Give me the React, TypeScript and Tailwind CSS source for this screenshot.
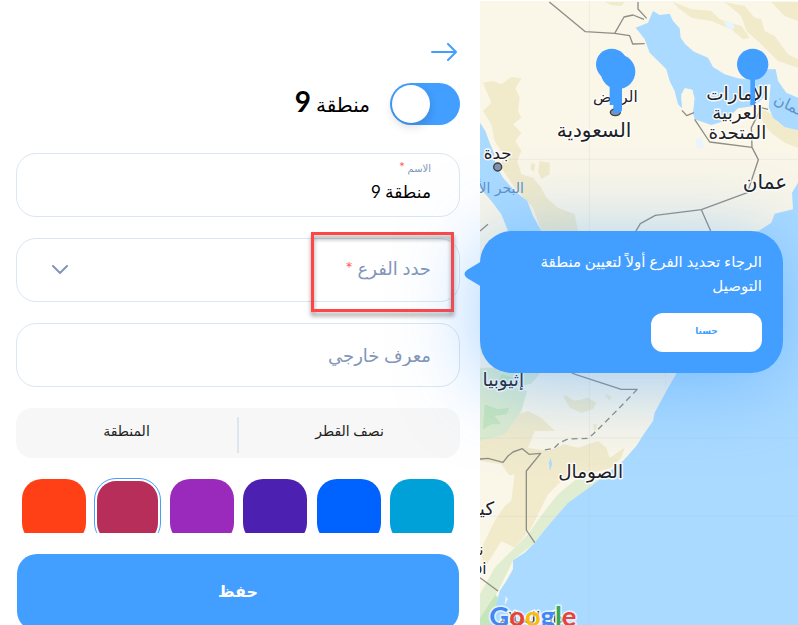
import { useState } from "react";

const COLORS = [
  { name: "سماوي", swatch: "bg-[#00a0d8]" },
  { name: "أزرق", swatch: "bg-[#0062ff]" },
  { name: "نيلي", swatch: "bg-[#4c20b0]" },
  { name: "بنفسجي", swatch: "bg-[#992abb]" },
  { name: "عنابي", swatch: "bg-[#b82e5a]" },
  { name: "برتقالي", swatch: "bg-[#ff4016]" },
];

interface MapLabelProps {
  x: number;
  y: number;
  size?: number;
  fill?: string;
  children: string;
}

function MapLabel({ x, y, size = 55, fill = "#1f2124", children }: MapLabelProps) {
  return (
    <text
      x={x}
      y={y}
      fontSize={size}
      fill={fill}
      textAnchor="middle"
      stroke="#fff"
      strokeOpacity={0.85}
      strokeWidth={9}
      strokeLinejoin="round"
      paintOrder="stroke"
    >
      {children}
    </text>
  );
}

function RegionMap() {
  return (
    <svg
      viewBox="6 -3 954 1875"
      preserveAspectRatio="xMinYMin slice"
      className="absolute inset-0 size-full font-['DejaVu_Sans',sans-serif]"
      role="img"
      aria-label="خريطة"
    >
      <rect x="0" y="0" width="960" height="1900" fill="#faf6e8" />

      {/* highlands */}
      <g fill="#f1eacb">
        <path d="M15 245L45 240L70 250L100 228L130 232L112 262L125 290L120 330L130 350L105 370L130 395L112 420L130 450L118 480L130 520L165 530L190 560L205 590L240 620L290 640L300 690L190 690L165 620L110 560L70 500L75 460L50 420L40 370L15 330L40 305Z" />
        <path d="M185 480L215 485L215 520L190 535L180 510ZM160 485L172 490L168 512L158 505Z" />
        <path d="M585 3L640 25L700 30L725 55L790 75L815 110L795 115L760 85L700 60L640 50L600 20ZM740 3L800 15L830 50L850 55L860 90L890 105L930 160L960 175L960 200L900 180L850 130L805 90L790 45ZM880 3L960 3L960 60L920 45ZM380 3L440 3L430 15L400 12Z" />
        <path d="M850 325L875 335L900 365L960 390L960 440L920 425L885 400L855 370Z" />
        <path d="M6 1240L90 1250L150 1230L190 1250L230 1290L170 1290L150 1340L210 1350L260 1330L300 1340L360 1320L385 1340L395 1370L440 1340L430 1370L400 1400L250 1440L210 1480L160 1580L110 1640L70 1620L20 1700L6 1650L50 1560L90 1500L100 1430L70 1390L6 1380Z" />
        <path d="M250 1175L290 1200L330 1190L355 1205L345 1225L310 1235L275 1220ZM345 1270L357 1270L350 1300ZM380 1180L400 1185L395 1200Z" />
      </g>
      <path d="M6 1100L200 1100L150 1160L130 1230L80 1300L6 1320Z" fill="#dcebcf" />
      <g fill="#c5e5bd">
        <path d="M20 1210L60 1225L95 1220L85 1240L50 1245L70 1270L40 1270L15 1285ZM70 1120L110 1130L85 1155L60 1145Z" />
        <path d="M6 1800L45 1770L60 1790L45 1875L6 1875ZM110 1640L130 1635L125 1660L105 1655ZM180 1560L190 1570L175 1610L160 1600Z" />
      </g>
      <path
        d="M430 1440L340 1455L270 1505L205 1580L170 1625L105 1678L60 1770L6 1850L6 1780L50 1700L100 1650L150 1600L200 1530L240 1480L300 1430Z"
        fill="#e1edd0"
      />
      <path d="M6 1450L60 1430L110 1420L100 1500L60 1530L30 1600L6 1600ZM110 1160L190 1140L300 1110L420 1120L330 1170L230 1190Z" fill="#faf6e8" />

      {/* seas */}
      <g fill="#aadaff">
        <path d="M525 30L545 42L575 38L585 60L605 82L608 110L622 130L648 152L690 170L705 198L740 220L780 232L830 238L860 205L893 205L900 240L925 275L960 290L960 388L920 378L885 350L872 318L878 250L870 250L856 290L830 315L780 322L740 360L700 372L650 355L645 335L650 290L640 265L620 262L610 290L615 325L600 310L590 270L575 240L565 205L535 175L515 155L500 115L485 95L473 80L510 65Z" />
        <path d="M6 365L22 390L35 425L48 455L52 490L75 530L110 570L148 600L165 645L190 690L200 740L120 740L90 690L70 640L40 600L6 560Z" />
        <path d="M960 545L942 575L945 625L890 638L880 665L826 700L700 780L560 1120L565 1170L530 1235L525 1260L500 1295L475 1335L435 1380L340 1455L270 1505L205 1580L170 1625L140 1655L105 1678L105 1705L85 1740L65 1770L55 1810L30 1890L960 1890Z" />
        <path d="M218 1370L222 1390L216 1410L213 1385Z" />
      </g>
      <path d="M700 780L594 1120L565 1170L560 1120L600 900Z" fill="#faf6e8" />
      <path d="M735 60L765 65L770 85L750 82ZM655 415L670 408L678 435L660 443L652 430ZM83 1785L90 1795L80 1812Z" fill="#e8f5ff" />
      <path d="M610 280L620 262L645 268L648 310L638 335L626 342L612 325Z" fill="#faf6e8" />
      <path d="M334 0V1890M6 475H960M6 1311H960M6 1546H960" stroke="#9fb9bd" strokeOpacity="0.15" strokeWidth="3" fill="none" />

      {/* borders */}
      <g fill="none" stroke="#8e8e88" strokeWidth="4" strokeLinejoin="round">
        <path d="M214 3L322 92L410 97L455 104L464 129L500 128M410 97L438 48L465 42L498 55M480 3V24L506 52" />
        <path d="M612 328L626 344L648 335M650 355L695 423L822 439L841 476L808 575L670 626L532 643L487 668L468 700M670 626L698 690L760 800M822 439L820 380L850 320L870 325" />
        <path d="M180 1070L292 1120L430 1165H478" />
        <path d="M478 1165L415 1230L345 1300L330 1312L270 1314L245 1325L228 1342L193 1348" strokeDasharray="18 12" />
        <path d="M6 1374L30 1372L75 1384L90 1365L105 1353L133 1343L153 1360L188 1357L145 1410V1587L170 1625M6 1730L60 1770M6 690L30 670" />
      </g>

      {/* places */}
      <MapLabel x={412} y={303} size={46}>الرياض</MapLabel>
      <MapLabel x={348} y={408} size={60}>السعودية</MapLabel>
      <MapLabel x={59} y={474} size={50}>جدة</MapLabel>
      <MapLabel x={778} y={296}>الإمارات</MapLabel>
      <MapLabel x={778} y={354}>العربية</MapLabel>
      <MapLabel x={778} y={413}>المتحدة</MapLabel>
      <MapLabel x={861} y={563} size={60}>عمان</MapLabel>
      <MapLabel x={76} y={1156}>إثيوبيا</MapLabel>
      <MapLabel x={338} y={1430}>الصومال</MapLabel>
      <MapLabel x={2} y={1542}>كينيا</MapLabel>
      <MapLabel x={-46} y={1662} size={46}>نيروبي</MapLabel>
      <MapLabel x={-56} y={1718} size={46}>Nairobi</MapLabel>
      <MapLabel x={160} y={1865} size={46}>دار السلام</MapLabel>
      <g fill="#5e90c9" fontSize="42">
        <text x="33" y="576" textAnchor="middle">البحر الأحمر</text>
        <text x="976" y="350" fontSize="46" textAnchor="middle" transform="rotate(26 976 350)">خليج عمان</text>
      </g>
      <g fill="#8391ab" stroke="#3c3f45" strokeWidth="4">
        <circle cx="59" cy="498" r="12" />
        <ellipse cx="412" cy="334" rx="15" ry="10" />
      </g>

      {/* branch pins */}
      <g fill="#429eff">
        <circle cx="401" cy="190" r="47" />
        <circle cx="420" cy="212" r="52" />
        <path d="M395 240H432V325Q432 336 420 336H406V312H395Z" />
        <circle cx="824" cy="190" r="47" />
        <rect x="817" y="230" width="14" height="82" />
      </g>

      <text
        x="34"
        y="1874"
        fontSize="82"
        fontWeight="700"
        stroke="#fff"
        strokeOpacity="0.6"
        strokeWidth="10"
        strokeLinejoin="round"
        paintOrder="stroke"
        direction="ltr"
        className="font-['Lato',sans-serif]"
      >
        <tspan fill="#4285f4">G</tspan>
        <tspan fill="#ea4335">o</tspan>
        <tspan fill="#fbbc04">o</tspan>
        <tspan fill="#4285f4">g</tspan>
        <tspan fill="#34a853">l</tspan>
        <tspan fill="#ea4335">e</tspan>
      </text>
    </svg>
  );
}

export default function App() {
  const [active, setActive] = useState(true);
  const [name, setName] = useState("منطقة 9");
  const [color, setColor] = useState("عنابي");

  return (
    <div className="grid h-screen grid-cols-[480fr_318fr] grid-rows-[minmax(0,1fr)] overflow-hidden bg-white font-['Lato','DejaVu_Sans',sans-serif]">
      {/* Zone form */}
      <form dir="rtl" className="flex min-w-0 flex-col pt-10 pr-5 pl-4">
        <button type="button" aria-label="رجوع" className="flex h-6 w-8 shrink-0 items-center justify-center self-start text-[#429eff]">
          <svg viewBox="0 0 26 18" className="h-[18px] w-[26px]" fill="none" stroke="currentColor" strokeWidth="2" strokeLinecap="round" strokeLinejoin="round">
            <path d="M1 9H25M17 1L25 9L17 17" />
          </svg>
        </button>

        <div className="mt-[19px] flex h-[42px] shrink-0 items-center gap-5">
          <label className="relative block h-[42px] w-[70px] shrink-0">
            <input
              type="checkbox"
              role="switch"
              aria-label="تفعيل المنطقة"
              checked={active}
              onChange={(e) => setActive(e.target.checked)}
              className="peer size-full appearance-none rounded-full bg-slate-300 checked:bg-[#429eff]"
            />
            <span className="pointer-events-none absolute top-0.5 right-0.5 size-[38px] rounded-full bg-white shadow-[0_4px_10px_rgba(0,0,0,0.15)] peer-checked:right-auto peer-checked:left-0.5" />
          </label>
          <h1 className="pb-1 text-xl text-black">
            منطقة <span className="text-[28px] font-bold">9</span>
          </h1>
        </div>

        <div className="mt-7 flex h-16 shrink-0 flex-col justify-center rounded-[20px] border border-[#dbe6f1] px-7 pb-1">
          <label htmlFor="name" className="text-[10px] leading-4 text-[#8296b8]">
            الاسم <span className="text-sm leading-4 text-[#ff5b5b]">*</span>
          </label>
          <input
            id="name"
            value={name}
            onChange={(e) => setName(e.target.value)}
            className="h-8 w-full bg-transparent text-[17px] text-black outline-none"
          />
        </div>

        <div className="relative mt-[21px] flex h-16 shrink-0 items-center rounded-[20px] border border-[#dbe6f1] px-7 pb-1">
          <label htmlFor="branch" className="text-lg text-[#8296b8]">
            حدد الفرع <span className="text-[#ff5b5b]">*</span>
          </label>
          <select id="branch" className="h-full min-w-0 flex-1 appearance-none bg-transparent outline-none">
            <option value="" />
          </select>
          <svg viewBox="0 0 18 10" className="pointer-events-none mt-1 ml-1.5 h-2.5 w-[18px]" fill="none" stroke="#8296b8" strokeWidth="2" strokeLinecap="round" strokeLinejoin="round">
            <path d="M2 1L9 8L16 1" />
          </svg>
          <div className="pointer-events-none absolute -top-[7px] right-[5px] h-20 w-[143px] border-3 border-[#ff4545] drop-shadow-[0_4px_2px_rgba(0,0,0,0.4)]" />
        </div>

        <input
          aria-label="معرف خارجي"
          placeholder="معرف خارجي"
          className="mt-[21px] h-16 shrink-0 rounded-[20px] border border-[#dbe6f1] px-7 text-lg outline-none placeholder:text-[#8296b8]"
        />

        <div className="mt-[21px] flex h-[50px] shrink-0 items-center rounded-2xl bg-[#f7f7f7] text-sm text-[#222]">
          <button type="button" className="h-full flex-1 pb-1">نصف القطر</button>
          <span className="mt-1 h-9 w-0.5 bg-[#dbe6f1]" />
          <button type="button" className="h-full flex-1 pb-1">المنطقة</button>
        </div>

        <fieldset className="mt-5 flex h-[55px] shrink-0 justify-between overflow-hidden px-1.5 pt-px">
          <legend className="sr-only">اللون</legend>
          {COLORS.map((c) => (
            <input
              key={c.name}
              type="radio"
              name="color"
              aria-label={c.name}
              checked={color === c.name}
              onChange={() => setColor(c.name)}
              className={`size-16 appearance-none rounded-[20px] checked:mx-[-1px] checked:-mt-px checked:size-[67px] checked:rounded-[22px] checked:border checked:border-[#429eff] checked:bg-clip-content checked:p-0.5 ${c.swatch}`}
            />
          ))}
        </fieldset>

        <button type="submit" className="mx-px mt-[21px] h-[77px] shrink-0 rounded-[20px] bg-[#429eff] pb-1 text-base font-bold text-white">
          حفظ
        </button>
      </form>

      {/* Map with the branch hint over it */}
      <section className="relative min-w-0">
        <RegionMap />
        <div
          dir="rtl"
          role="dialog"
          aria-label="تنبيه"
          className="absolute top-[231px] right-[15px] left-0 rounded-[32px] bg-[#429eff] px-[21px] pt-[18px] pb-[21px] text-white shadow-[0_10px_80px_rgba(66,158,255,0.5)]"
        >
          <svg viewBox="0 0 18 28" className="absolute top-[29px] -left-4 h-7 w-[18px]" fill="#429eff">
            <path d="M18 1L3 10Q-2 14 3 18L18 27Z" />
          </svg>
          <p className="text-[15px] leading-6 font-medium">الرجاء تحديد الفرع أولاً لتعيين منطقة التوصيل</p>
          <button type="button" className="mt-4 h-[39px] w-[111px] rounded-xl bg-white pb-1 text-[9px] font-bold text-[#429eff]">
            حسنا
          </button>
        </div>
      </section>
    </div>
  );
}
